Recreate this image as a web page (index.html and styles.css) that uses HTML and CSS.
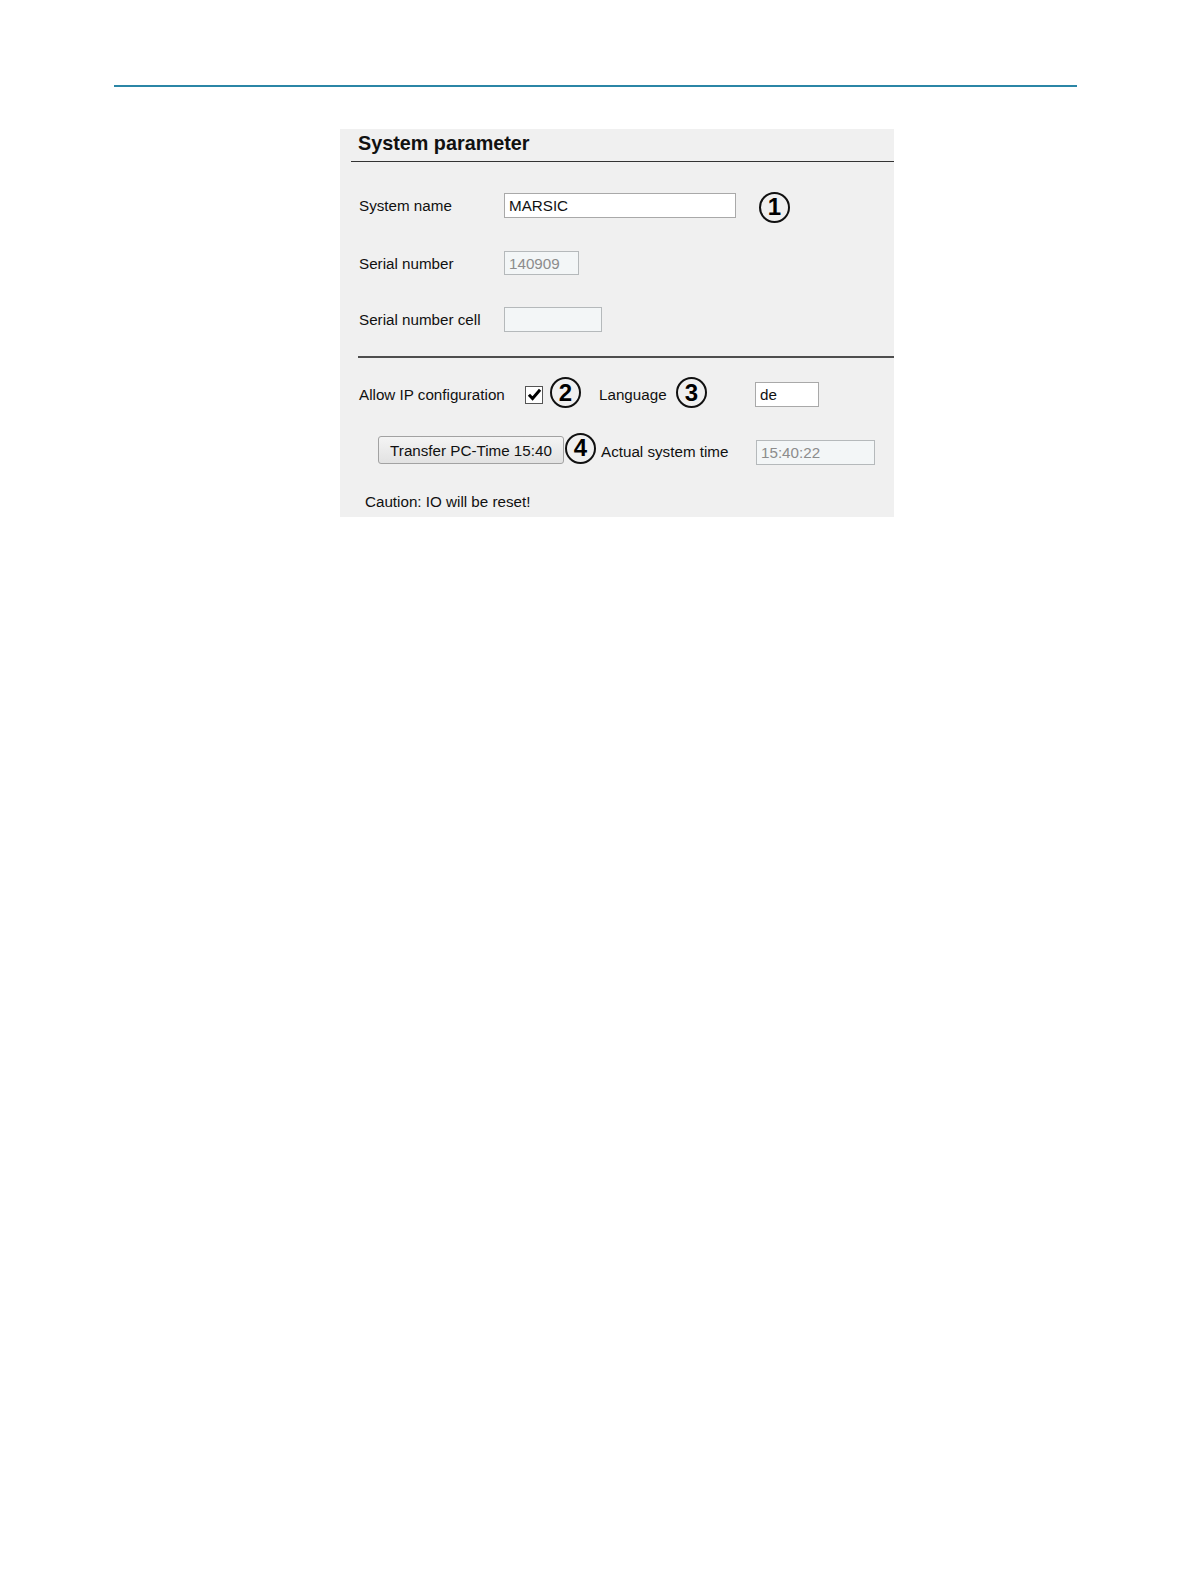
FILE: index.html
```html
<!DOCTYPE html>
<html>
<head>
<meta charset="utf-8">
<title>System parameter</title>
<link rel="stylesheet" href="styles.css">
</head>
<body>
<div class="top-rule"></div>
<div class="panel">
  <div class="title">System parameter</div>
  <div class="row row1">
    <span class="label">System name</span>
    <span class="field field-name">MARSIC</span>
    <span class="num num1">1</span>
  </div>
  <div class="row row2">
    <span class="label">Serial number</span>
    <span class="field field-serial disabled">140909</span>
  </div>
  <div class="row row3">
    <span class="label">Serial number cell</span>
    <span class="field field-cell disabled"></span>
  </div>
  <div class="sep"></div>
  <div class="row row4">
    <span class="label label-ip">Allow IP configuration</span>
    <span class="check"><svg width="15" height="15" viewBox="0 0 14 14"><path d="M1.8 7.2 L5.2 10.8 L12.2 2.6" fill="none" stroke="#000" stroke-width="2.8"/></svg></span>
    <span class="num num2">2</span>
    <span class="text-lang">Language</span>
    <span class="num num3">3</span>
    <span class="field field-lang">de</span>
  </div>
  <div class="row row5">
    <span class="button">Transfer PC-Time 15:40</span>
    <span class="num num4">4</span>
    <span class="text-actual">Actual system time</span>
    <span class="field field-time disabled">15:40:22</span>
  </div>
  <div class="caution">Caution: IO will be reset!</div>
</div>
</body>
</html>
```
FILE: styles.css
```css
html, body {
  margin: 0;
  padding: 0;
  background: #ffffff;
}
body {
  font-family: "Liberation Sans", Arial, sans-serif;
  color: #111;
}
.top-rule {
  margin: 85px 0 0 114px;
  width: 963px;
  height: 2px;
  background: #2b86a6;
}
.panel {
  margin: 42px 0 0 340px;
  width: 554px;
  height: 388px;
  background: #f0f0f0;
  box-sizing: border-box;
}
.title {
  box-sizing: border-box;
  margin-left: 11px;
  height: 33px;
  padding-left: 7px;
  line-height: 29px;
  font-size: 19.8px;
  font-weight: bold;
  color: #111;
  border-bottom: 1.5px solid #333;
}
.row {
  display: flex;
  align-items: center;
  padding-left: 19px;
  font-size: 15.2px;
}
.label {
  width: 145px;
  flex: none;
}
.row1 { margin-top: 31px; height: 25px; }
.row2 { margin-top: 33px; height: 24px; }
.row3 { margin-top: 32px; height: 25px; }
.field {
  box-sizing: border-box;
  height: 25px;
  background: #fff;
  border: 1px solid #a9a9a9;
  padding-left: 4px;
  line-height: 24px;
  font-size: 15.2px;
  color: #111;
  flex: none;
}
.field.disabled {
  background: #f3f6f7;
  border-color: #b5b9bb;
  color: #8c8c8c;
}
.field-name { width: 232px; }
.field-serial { width: 75px; height: 24px; line-height: 23px; }
.field-cell { width: 98px; }
.num {
  box-sizing: border-box;
  width: 31px;
  height: 31px;
  border: 2px solid #111;
  border-radius: 50%;
  display: flex;
  align-items: center;
  justify-content: center;
  font-size: 24px;
  font-weight: bold;
  line-height: 1;
  color: #000;
  flex: none;
}
.num1 { margin-left: 23px; margin-top: 3px; }
.sep {
  margin: 24px 0 0 18px;
  height: 2px;
  background: #4e4e4e;
}
.row4 { margin-top: 24px; height: 25px; }
.label-ip { width: 166px; }
.check {
  box-sizing: border-box;
  width: 18px;
  height: 18px;
  border: 1px solid #555;
  background: #fff;
  display: flex;
  align-items: center;
  justify-content: center;
  flex: none;
}
.num2 { margin-left: 7px; margin-top: -4px; }
.text-lang { margin-left: 18px; width: 77px; flex: none; }
.num3 { margin-top: -4px; }
.field-lang { margin-left: 48px; width: 64px; }
.row5 { margin-top: 29px; height: 30px; padding-left: 38px; }
.button {
  box-sizing: border-box;
  width: 186px;
  height: 28px;
  border: 1px solid #a2a2a2;
  border-radius: 3px;
  background: linear-gradient(#f4f4f4, #e2e2e2);
  display: flex;
  align-items: center;
  justify-content: center;
  font-size: 15.2px;
  color: #111;
  flex: none;
  margin-top: -2px;
}
.num4 { margin-left: 1px; margin-top: -6px; }
.text-actual { margin-left: 5px; width: 155px; flex: none; }
.field-time { width: 119px; margin-top: 2px; }
.caution {
  margin: 26px 0 0 25px;
  height: 20px;
  line-height: 20px;
  font-size: 15.2px;
}
```
